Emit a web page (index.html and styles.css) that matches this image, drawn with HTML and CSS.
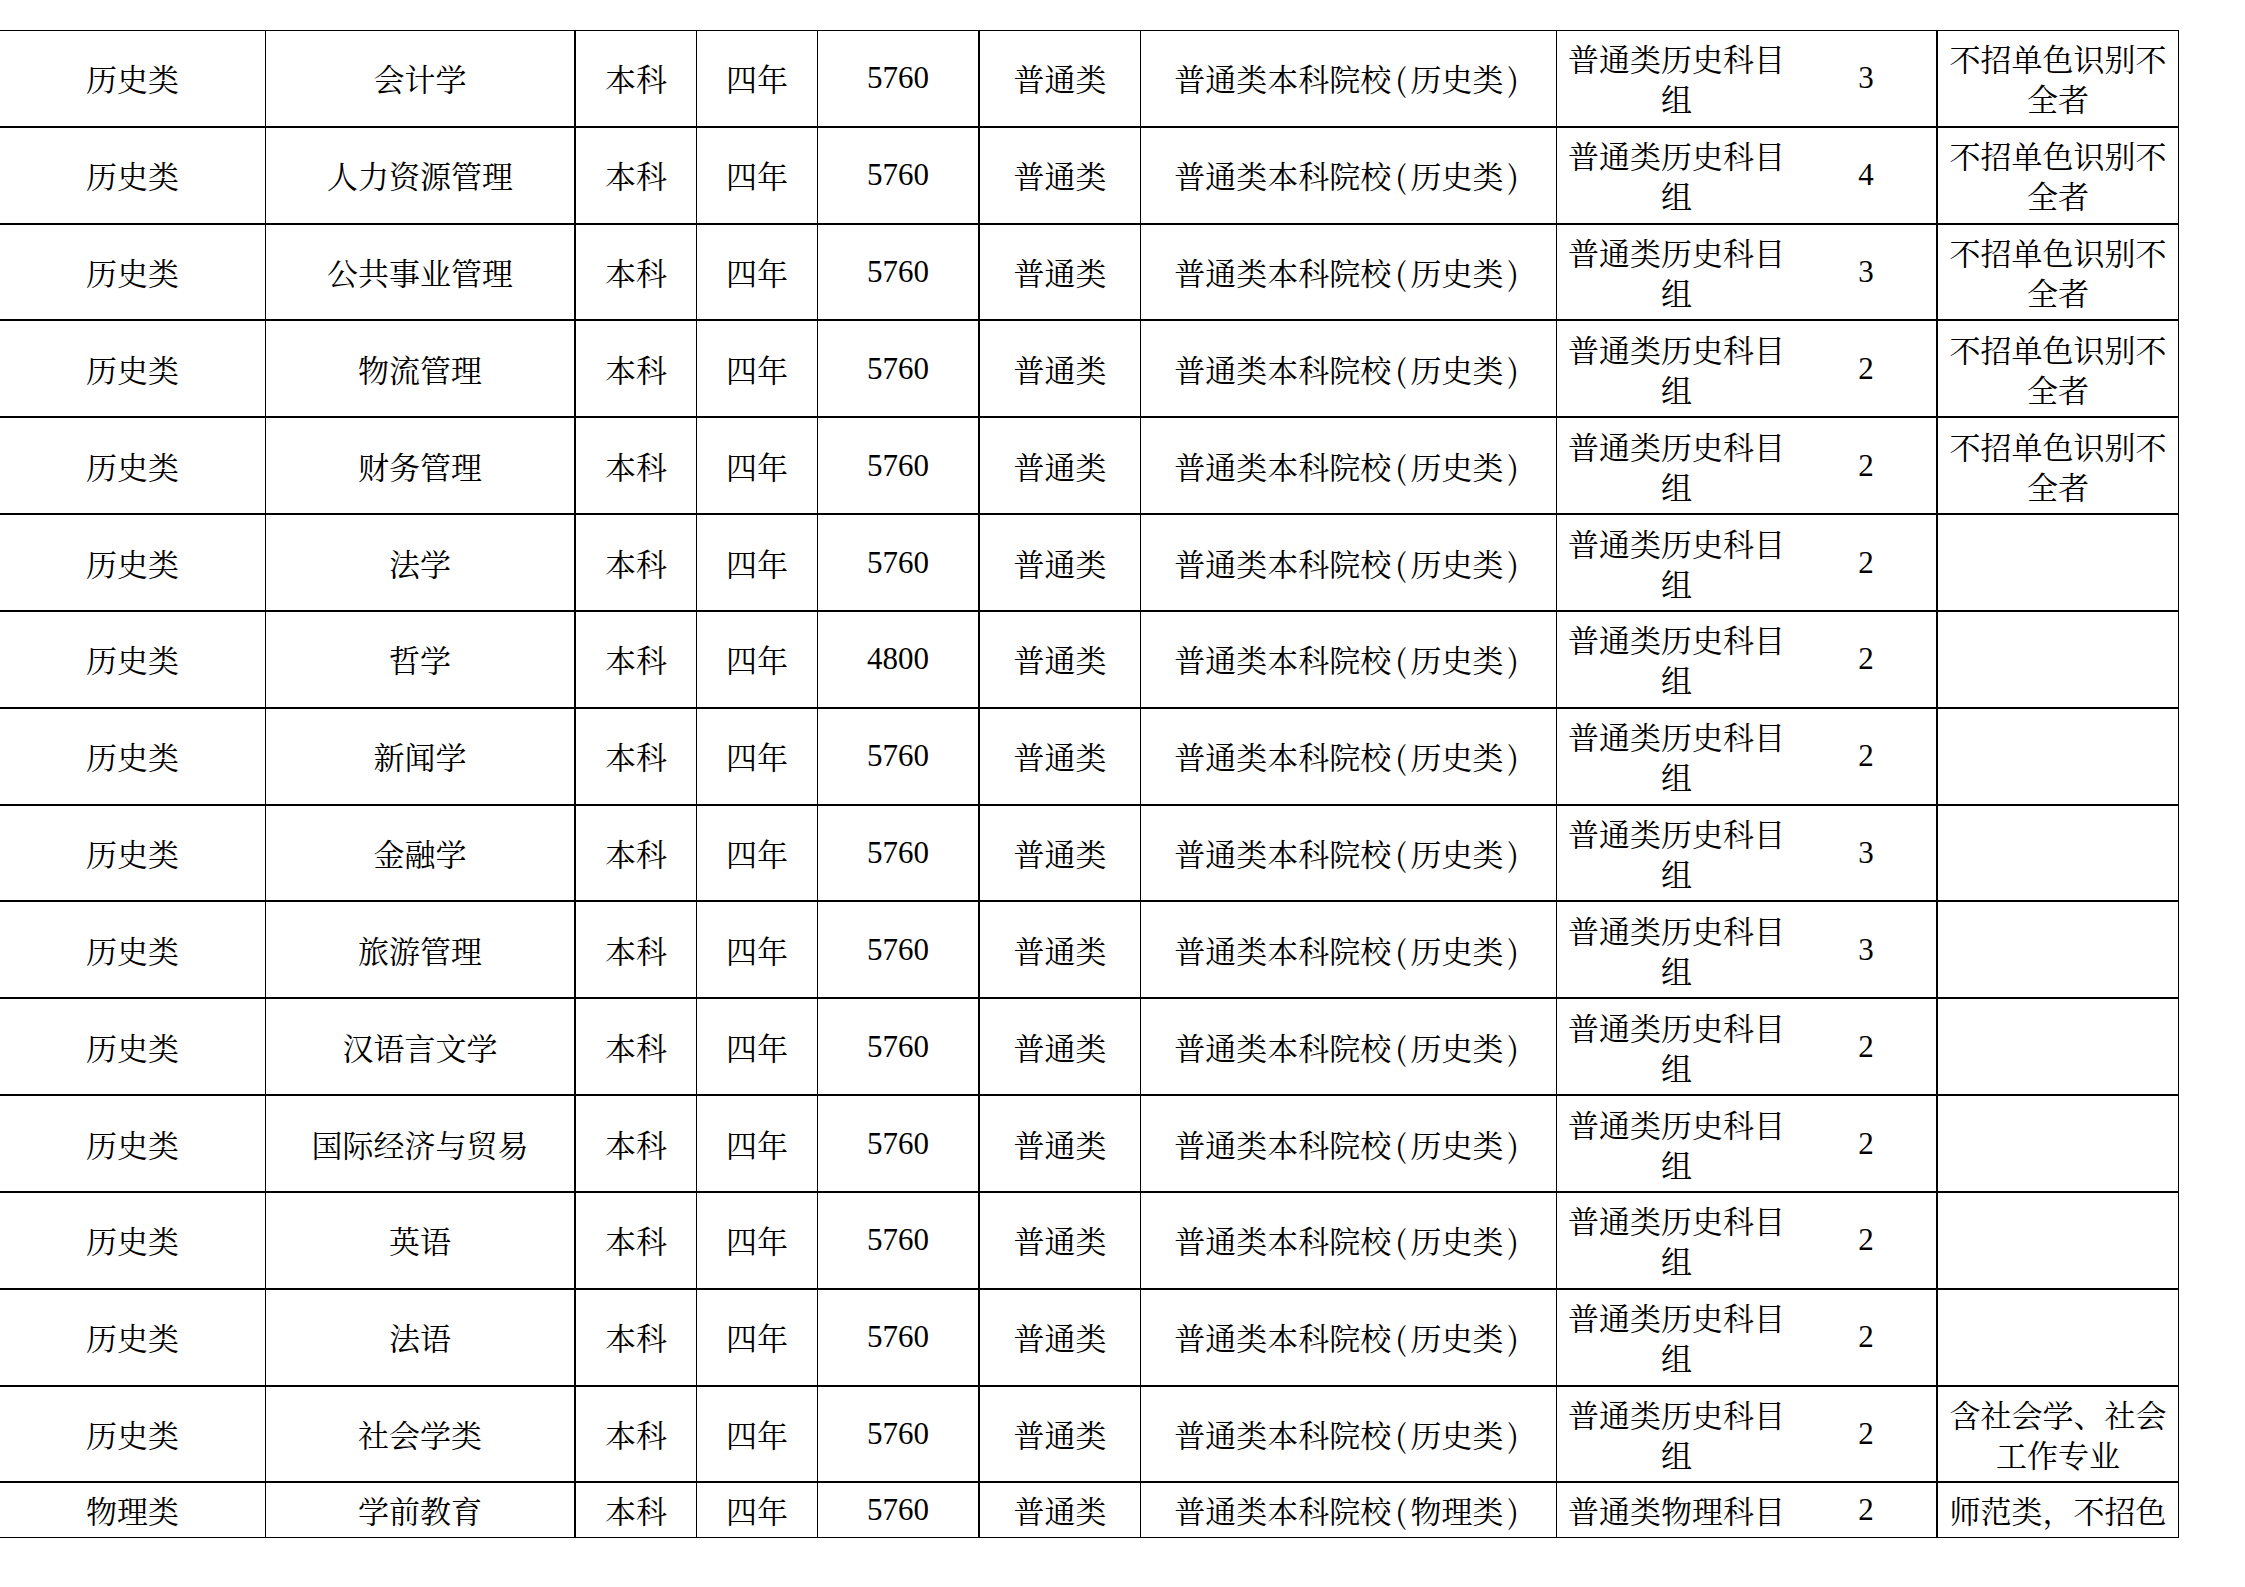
FILE: index.html
```html
<!DOCTYPE html>
<html lang="zh-CN">
<head>
<meta charset="utf-8">
<title>招生计划</title>
<link rel="stylesheet" href="styles.css">
</head>
<body>
<div class="sheet">
  <div class="cell c1">历史类</div><div class="cell c2">会计学</div><div class="cell c3">本科</div><div class="cell c4">四年</div><div class="cell c5 num">5760</div><div class="cell c6">普通类</div><div class="cell c7">普通类本科院校<span class="pa">(</span>历史类<span class="pa">)</span></div><div class="cell c8">普通类历史科目组</div><div class="cell c9 num">3</div><div class="cell c10">不招单色识别不全者</div>
  <div class="cell c1">历史类</div><div class="cell c2">人力资源管理</div><div class="cell c3">本科</div><div class="cell c4">四年</div><div class="cell c5 num">5760</div><div class="cell c6">普通类</div><div class="cell c7">普通类本科院校<span class="pa">(</span>历史类<span class="pa">)</span></div><div class="cell c8">普通类历史科目组</div><div class="cell c9 num">4</div><div class="cell c10">不招单色识别不全者</div>
  <div class="cell c1">历史类</div><div class="cell c2">公共事业管理</div><div class="cell c3">本科</div><div class="cell c4">四年</div><div class="cell c5 num">5760</div><div class="cell c6">普通类</div><div class="cell c7">普通类本科院校<span class="pa">(</span>历史类<span class="pa">)</span></div><div class="cell c8">普通类历史科目组</div><div class="cell c9 num">3</div><div class="cell c10">不招单色识别不全者</div>
  <div class="cell c1">历史类</div><div class="cell c2">物流管理</div><div class="cell c3">本科</div><div class="cell c4">四年</div><div class="cell c5 num">5760</div><div class="cell c6">普通类</div><div class="cell c7">普通类本科院校<span class="pa">(</span>历史类<span class="pa">)</span></div><div class="cell c8">普通类历史科目组</div><div class="cell c9 num">2</div><div class="cell c10">不招单色识别不全者</div>
  <div class="cell c1">历史类</div><div class="cell c2">财务管理</div><div class="cell c3">本科</div><div class="cell c4">四年</div><div class="cell c5 num">5760</div><div class="cell c6">普通类</div><div class="cell c7">普通类本科院校<span class="pa">(</span>历史类<span class="pa">)</span></div><div class="cell c8">普通类历史科目组</div><div class="cell c9 num">2</div><div class="cell c10">不招单色识别不全者</div>
  <div class="cell c1">历史类</div><div class="cell c2">法学</div><div class="cell c3">本科</div><div class="cell c4">四年</div><div class="cell c5 num">5760</div><div class="cell c6">普通类</div><div class="cell c7">普通类本科院校<span class="pa">(</span>历史类<span class="pa">)</span></div><div class="cell c8">普通类历史科目组</div><div class="cell c9 num">2</div><div class="cell c10"></div>
  <div class="cell c1">历史类</div><div class="cell c2">哲学</div><div class="cell c3">本科</div><div class="cell c4">四年</div><div class="cell c5 num">4800</div><div class="cell c6">普通类</div><div class="cell c7">普通类本科院校<span class="pa">(</span>历史类<span class="pa">)</span></div><div class="cell c8">普通类历史科目组</div><div class="cell c9 num">2</div><div class="cell c10"></div>
  <div class="cell c1">历史类</div><div class="cell c2">新闻学</div><div class="cell c3">本科</div><div class="cell c4">四年</div><div class="cell c5 num">5760</div><div class="cell c6">普通类</div><div class="cell c7">普通类本科院校<span class="pa">(</span>历史类<span class="pa">)</span></div><div class="cell c8">普通类历史科目组</div><div class="cell c9 num">2</div><div class="cell c10"></div>
  <div class="cell c1">历史类</div><div class="cell c2">金融学</div><div class="cell c3">本科</div><div class="cell c4">四年</div><div class="cell c5 num">5760</div><div class="cell c6">普通类</div><div class="cell c7">普通类本科院校<span class="pa">(</span>历史类<span class="pa">)</span></div><div class="cell c8">普通类历史科目组</div><div class="cell c9 num">3</div><div class="cell c10"></div>
  <div class="cell c1">历史类</div><div class="cell c2">旅游管理</div><div class="cell c3">本科</div><div class="cell c4">四年</div><div class="cell c5 num">5760</div><div class="cell c6">普通类</div><div class="cell c7">普通类本科院校<span class="pa">(</span>历史类<span class="pa">)</span></div><div class="cell c8">普通类历史科目组</div><div class="cell c9 num">3</div><div class="cell c10"></div>
  <div class="cell c1">历史类</div><div class="cell c2">汉语言文学</div><div class="cell c3">本科</div><div class="cell c4">四年</div><div class="cell c5 num">5760</div><div class="cell c6">普通类</div><div class="cell c7">普通类本科院校<span class="pa">(</span>历史类<span class="pa">)</span></div><div class="cell c8">普通类历史科目组</div><div class="cell c9 num">2</div><div class="cell c10"></div>
  <div class="cell c1">历史类</div><div class="cell c2">国际经济与贸易</div><div class="cell c3">本科</div><div class="cell c4">四年</div><div class="cell c5 num">5760</div><div class="cell c6">普通类</div><div class="cell c7">普通类本科院校<span class="pa">(</span>历史类<span class="pa">)</span></div><div class="cell c8">普通类历史科目组</div><div class="cell c9 num">2</div><div class="cell c10"></div>
  <div class="cell c1">历史类</div><div class="cell c2">英语</div><div class="cell c3">本科</div><div class="cell c4">四年</div><div class="cell c5 num">5760</div><div class="cell c6">普通类</div><div class="cell c7">普通类本科院校<span class="pa">(</span>历史类<span class="pa">)</span></div><div class="cell c8">普通类历史科目组</div><div class="cell c9 num">2</div><div class="cell c10"></div>
  <div class="cell c1">历史类</div><div class="cell c2">法语</div><div class="cell c3">本科</div><div class="cell c4">四年</div><div class="cell c5 num">5760</div><div class="cell c6">普通类</div><div class="cell c7">普通类本科院校<span class="pa">(</span>历史类<span class="pa">)</span></div><div class="cell c8">普通类历史科目组</div><div class="cell c9 num">2</div><div class="cell c10"></div>
  <div class="cell c1">历史类</div><div class="cell c2">社会学类</div><div class="cell c3">本科</div><div class="cell c4">四年</div><div class="cell c5 num">5760</div><div class="cell c6">普通类</div><div class="cell c7">普通类本科院校<span class="pa">(</span>历史类<span class="pa">)</span></div><div class="cell c8">普通类历史科目组</div><div class="cell c9 num">2</div><div class="cell c10">含社会学、社会工作专业</div>
  <div class="cell c1 last">物理类</div><div class="cell c2 last">学前教育</div><div class="cell c3 last">本科</div><div class="cell c4 last">四年</div><div class="cell c5 num last">5760</div><div class="cell c6 last">普通类</div><div class="cell c7 last">普通类本科院校<span class="pa">(</span>物理类<span class="pa">)</span></div><div class="cell c8 last">普通类物理科目</div><div class="cell c9 num last">2</div><div class="cell c10 last">师范类，不招色</div>
</div>
</body>
</html>
```
FILE: styles.css
```css
html, body {
  margin: 0;
  padding: 0;
  background: #ffffff;
}

body {
  padding-top: 30px;
  font-family: "Noto Serif CJK SC", "Noto Sans CJK SC", serif;
  font-size: 31px;
  line-height: 40px;
  color: #000000;
}

.sheet {
  display: grid;
  grid-template-columns: 266px 310px 121px 121px 162px 161px 416px 239px 142px 241px;
  grid-template-rows: repeat(15, 96.84px) 55px;
  width: max-content;
  border-top: 1px solid #000;
}

.cell {
  box-sizing: border-box;
  display: flex;
  align-items: center;
  justify-content: center;
  text-align: center;
  padding: 0 8px;
  border-right: 1px solid #000;
  border-bottom: 2px solid #000;
  overflow: hidden;
}

.c7 {
  display: block;
  align-content: center;
  white-space: nowrap;
}

.pa {
  padding: 0 4px;
}

.c2, .c5, .c9 {
  border-right-width: 2px;
}

.c8 {
  border-right: 0;
}

.c10 {
  padding: 0 4px;
}

.num {
  font-family: "Liberation Serif", "Noto Serif CJK SC", serif;
}

.last {
  border-bottom-width: 1px;
  white-space: nowrap;
}
```
